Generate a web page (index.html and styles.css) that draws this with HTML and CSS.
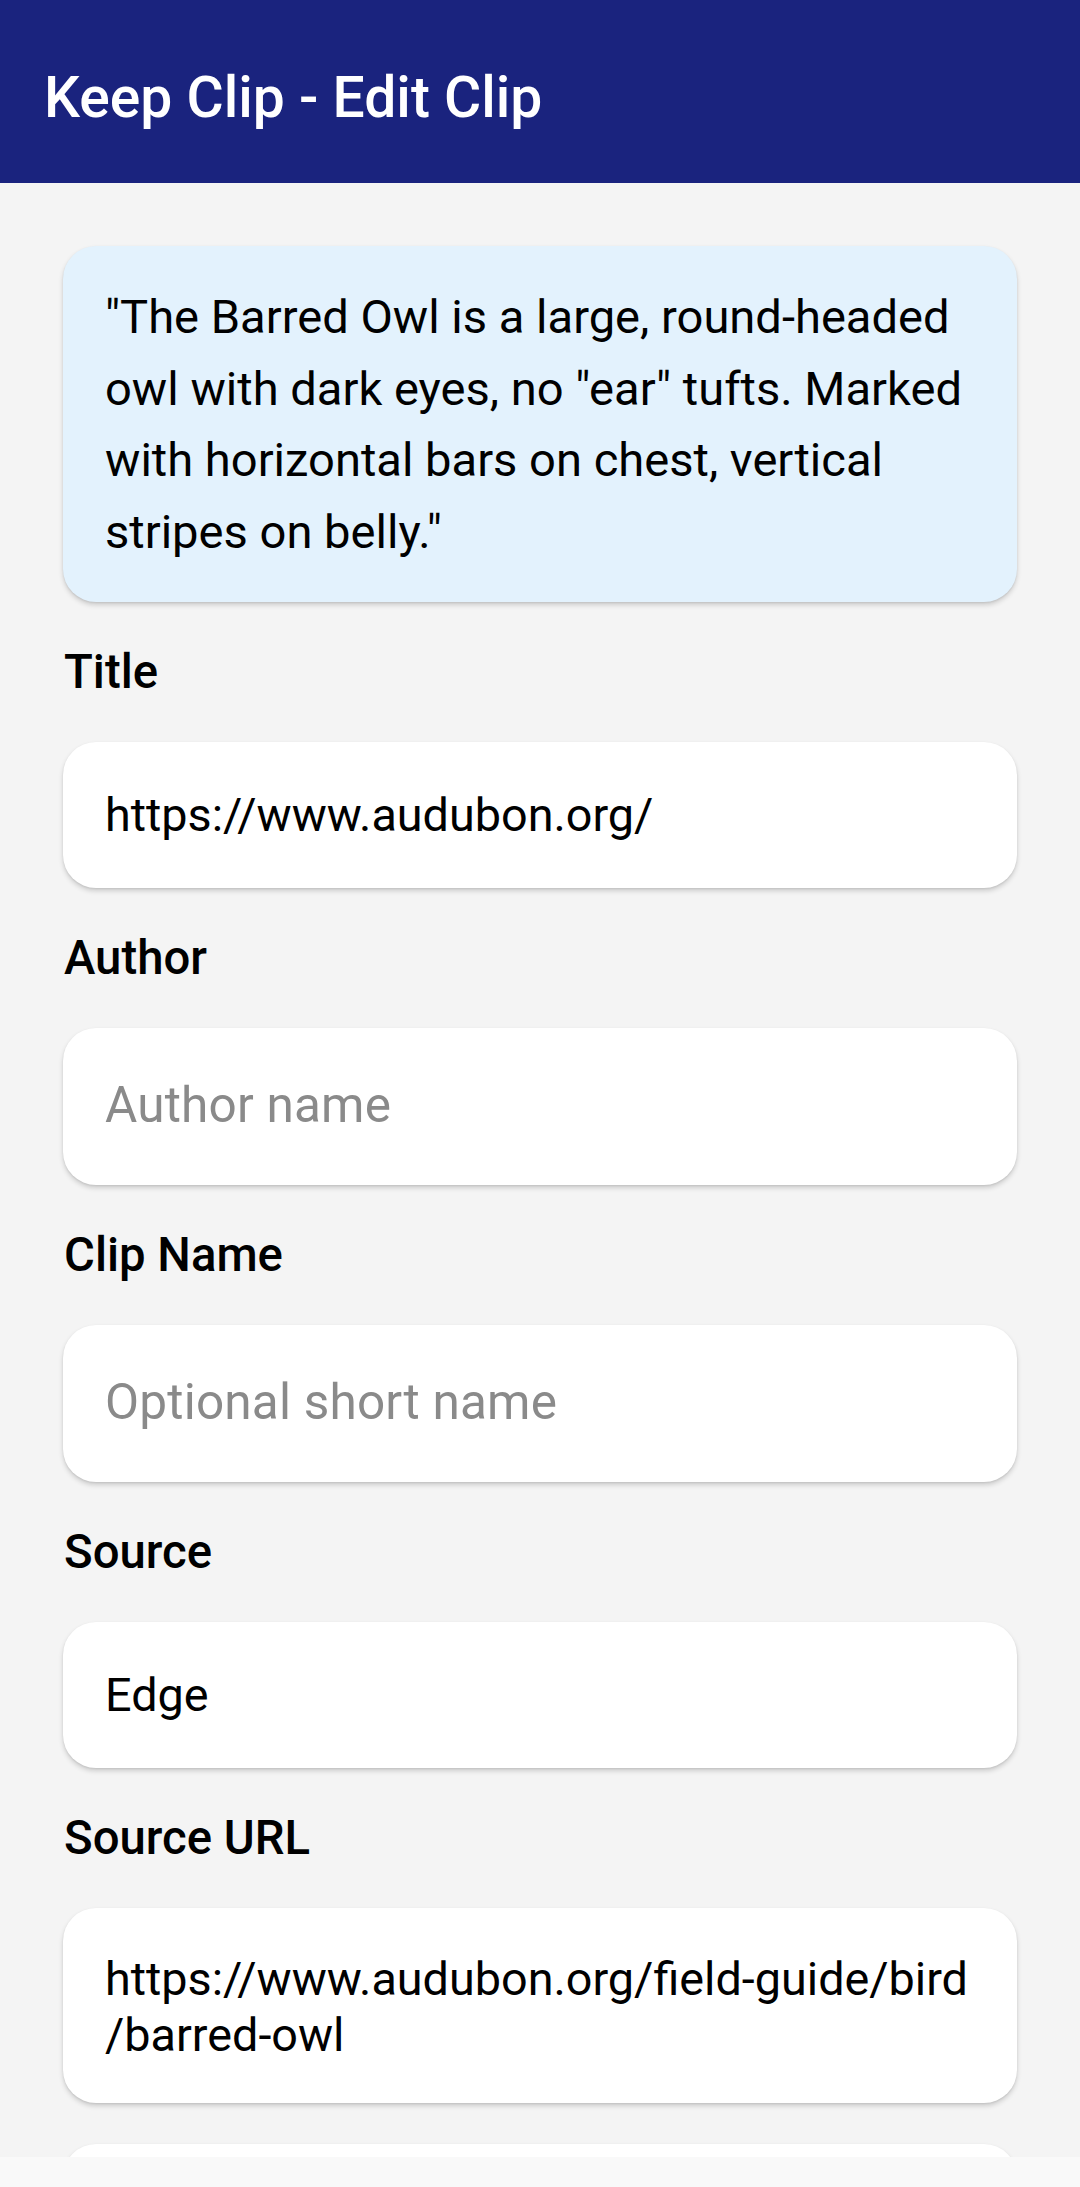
FILE: index.html
```html
<!DOCTYPE html>
<html lang="en">
<head>
<meta charset="utf-8">
<title>Keep Clip - Edit Clip</title>
<link rel="stylesheet" href="styles.css">
</head>
<body>
<div class="screen">
  <header class="appbar">
    <h1 class="appbar-title">Keep Clip - Edit Clip</h1>
  </header>
  <main class="content">
    <div class="quote-card">"The Barred Owl is a large, round-headed owl with dark eyes, no "ear" tufts. Marked with horizontal bars on chest, vertical stripes on belly."</div>

    <div class="label">Title</div>
    <div class="field">https://www.audubon.org/</div>

    <div class="label">Author</div>
    <div class="field field-empty"><span class="placeholder">Author name</span></div>

    <div class="label">Clip Name</div>
    <div class="field field-empty"><span class="placeholder">Optional short name</span></div>

    <div class="label">Source</div>
    <div class="field">Edge</div>

    <div class="label">Source URL</div>
    <div class="field field-multi">https://www.audubon.org/field-guide/bird<wbr>/barred-owl</div>

    <div class="field field-next"></div>
  </main>
  <div class="navbar"></div>
</div>
</body>
</html>
```

FILE: styles.css
```css
* {
  box-sizing: border-box;
}

html, body {
  margin: 0;
  padding: 0;
  background: #f4f4f4;
}

body {
  font-family: Roboto, "Noto Sans", "Liberation Sans", sans-serif;
  color: #000;
}

.screen {
  width: 1080px;
  height: 2187px;
  display: flex;
  flex-direction: column;
  overflow: hidden;
  background: #f4f4f4;
}

.appbar {
  flex: none;
  height: 183px;
  background: #1a237e;
  padding: 66px 44px 0;
}

.appbar-title {
  margin: 0;
  font-size: 57px;
  line-height: 64px;
  font-weight: 500;
  color: #ffffff;
}

.content {
  flex: 1;
  min-height: 0;
  overflow: hidden;
  padding: 63px 63px 0;
  display: flex;
  flex-direction: column;
  gap: 41px;
}

.quote-card {
  flex: none;
  background: #e3f2fd;
  border-radius: 33px;
  padding: 35px 42px 34px;
  font-size: 47.1px;
  line-height: 71.7px;
  box-shadow: 0 3px 5px rgba(0, 0, 0, 0.16), 0 1px 2px rgba(0, 0, 0, 0.08);
}

.label {
  flex: none;
  font-size: 47.3px;
  line-height: 58px;
  font-weight: 500;
  padding-left: 1px;
}

.field {
  flex: none;
  background: #ffffff;
  border-radius: 33px;
  padding: 45px 42px;
  font-size: 46.75px;
  line-height: 56px;
  box-shadow: 0 3px 5px rgba(0, 0, 0, 0.16), 0 1px 2px rgba(0, 0, 0, 0.08);
}

.field-empty {
  padding: 44px 42px 46px;
  line-height: 66px;
}

.placeholder {
  font-size: 49.5px;
  color: #8a8a8a;
  letter-spacing: 0.2px;
}

.field-multi {
  padding: 43px 42px 40px;
}

.field-next {
  height: 150px;
}

.navbar {
  flex: none;
  height: 30px;
  background: #f9f9f9;
}
```
